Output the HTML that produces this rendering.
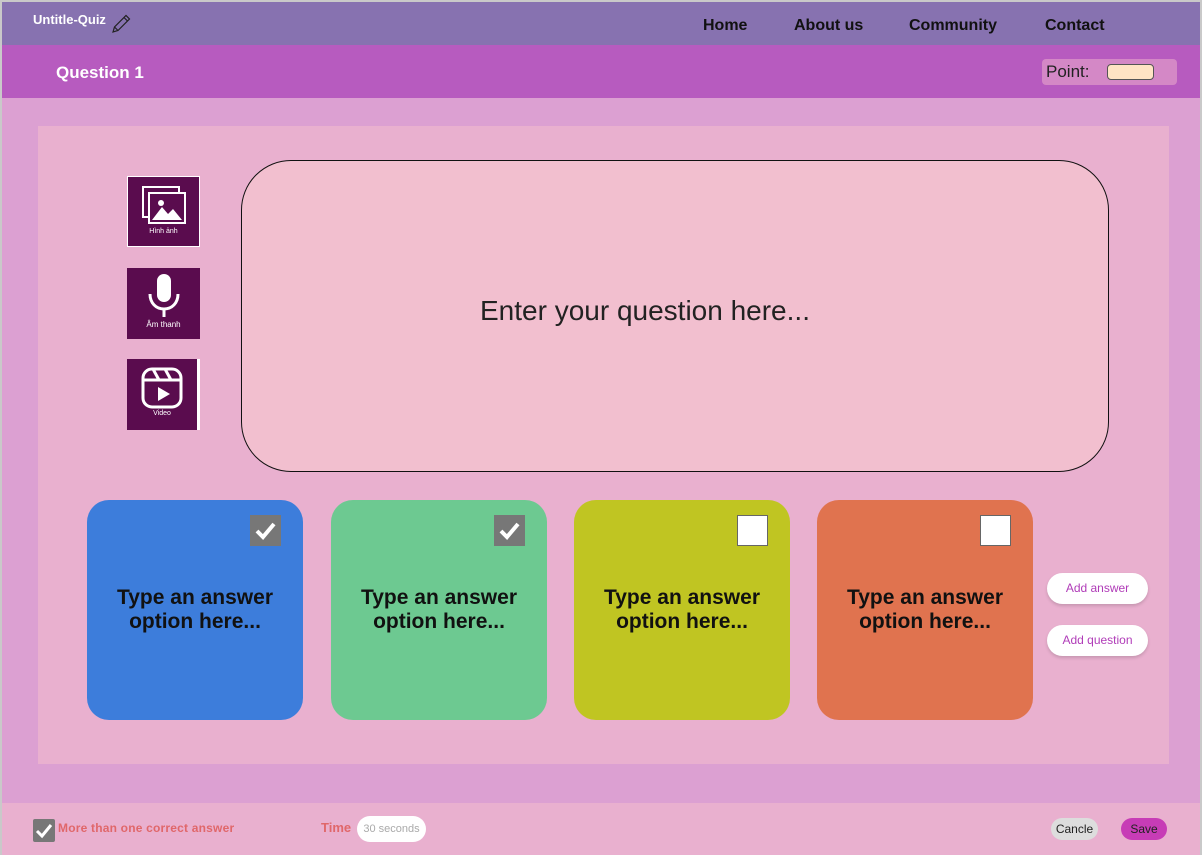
<!DOCTYPE html>
<html><head><meta charset="utf-8"><style>
*{margin:0;padding:0;box-sizing:border-box}
body{width:1202px;height:855px;overflow:hidden;background:#dca0d2;font-family:"Liberation Sans",sans-serif;position:relative}
.a{position:absolute}
.frame{left:0;top:0;width:1202px;height:855px;border:2px solid #c9c9c9;border-bottom:none;pointer-events:none}
.top{left:0;top:0;width:1202px;height:45px;background:#8772b0}
.qbar{left:0;top:45px;width:1202px;height:53px;background:#b75bbf}
.nav{top:17px;font-weight:bold;font-size:16px;color:#111}
.panel{left:38px;top:126px;width:1131px;height:638px;background:#e9b0cf}
.qbox{left:241px;top:160px;width:868px;height:312px;background:#f2bfcf;border:1px solid #111;border-radius:50px;display:flex;align-items:center;justify-content:center;font-size:28px;color:#222;padding-right:60px;padding-bottom:10px}
.media{left:127px;width:73px;height:71px;background:#5a0c4e;color:#fff;font-size:7px;text-align:center}
.card{top:500px;width:216px;height:220px;border-radius:22px;display:flex;align-items:center;justify-content:center;text-align:center;font-weight:bold;font-size:21px;line-height:24px;color:#111;padding-top:0}
.cb{width:31px;height:31px;top:15px;right:22px;position:absolute;background:#fff;border:1px solid #666}
.cb.on{background:#777;border:none}
.btn{left:1047px;width:101px;height:31px;background:#fff;border-radius:16px;color:#b03cb8;font-size:12px;line-height:31px;text-align:center;box-shadow:0 2px 3px rgba(0,0,0,.15)}
.foot{left:0;top:803px;width:1202px;height:52px;background:#e9b0cf}
</style></head><body>
<div class="a top"></div>
<div class="a" style="left:33px;top:12px;color:#fff;font-weight:bold;font-size:13px">Untitle-Quiz</div>
<svg class="a" style="left:110px;top:11px" width="24" height="24" viewBox="0 0 24 24" fill="none" stroke="#222" stroke-width="1.2"><path d="M3 21l1.5-5L16 4.5l3.5 3.5L8 19.5z M14 6.5l3.5 3.5 M4.5 16l3.5 3.5"/></svg>
<div class="a nav" style="left:703px">Home</div>
<div class="a nav" style="left:794px">About us</div>
<div class="a nav" style="left:909px">Community</div>
<div class="a nav" style="left:1045px">Contact</div>
<div class="a qbar"></div>
<div class="a" style="left:56px;top:63px;color:#fff;font-weight:bold;font-size:17px">Question 1</div>
<div class="a" style="left:1042px;top:59px;width:135px;height:26px;background:#d488c6;border-radius:4px"></div>
<div class="a" style="left:1046px;top:62px;font-size:17px;color:#222">Point:</div>
<div class="a" style="left:1107px;top:64px;width:47px;height:16px;background:#ffe4c4;border:1px solid #555;border-radius:4px"></div>
<div class="a panel"></div>
<div class="a media" style="top:176px;border:1px solid #fff">
<svg width="50" height="46" viewBox="0 0 50 46" style="margin-top:6px"><rect x="4" y="4" width="36" height="30" fill="none" stroke="#fff" stroke-width="2"/><rect x="10" y="10" width="36" height="30" fill="#5a0c4e" stroke="#fff" stroke-width="2"/><circle cx="22" cy="20" r="3" fill="#fff"/><path d="M13 37l10-13 6 7 5-5 9 11z" fill="#fff"/></svg><div style="margin-top:-3px">Hình ảnh</div></div>
<div class="a media" style="top:268px">
<svg width="40" height="50" viewBox="0 0 40 50" style="margin-top:4px"><rect x="13" y="2" width="14" height="28" rx="7" fill="#fff"/><path d="M6 22c0 9 6 15 14 15s14-6 14-15" fill="none" stroke="#fff" stroke-width="3"/><path d="M20 37v8" stroke="#fff" stroke-width="3"/></svg><div style="margin-top:-4px;font-size:8px">Âm thanh</div></div>
<div class="a media" style="top:359px;border-right:3px solid #fff">
<svg width="46" height="46" viewBox="0 0 46 46" style="margin-top:6px"><rect x="4" y="4" width="38" height="38" rx="9" fill="none" stroke="#fff" stroke-width="3"/><path d="M4 15h38 M14 4l6 11 M26 4l6 11" stroke="#fff" stroke-width="3"/><path d="M19 22v14l12-7z" fill="#fff"/></svg><div style="margin-top:-3px">Video</div></div>
<div class="a qbox">Enter your question here...</div>
<div class="a card" style="left:87px;background:#3d7ddb"><div class="cb on"><svg width="31" height="31" viewBox="0 0 31 31"><path d="M7 16l6 6 11-13" fill="none" stroke="#fff" stroke-width="4"/></svg></div>Type an answer<br>option here...</div>
<div class="a card" style="left:331px;background:#6dc991"><div class="cb on"><svg width="31" height="31" viewBox="0 0 31 31"><path d="M7 16l6 6 11-13" fill="none" stroke="#fff" stroke-width="4"/></svg></div>Type an answer<br>option here...</div>
<div class="a card" style="left:574px;background:#c0c522"><div class="cb"></div>Type an answer<br>option here...</div>
<div class="a card" style="left:817px;background:#e0734f"><div class="cb"></div>Type an answer<br>option here...</div>
<div class="a btn" style="top:573px">Add answer</div>
<div class="a btn" style="top:625px">Add question</div>
<div class="a foot"></div>
<div class="a" style="left:33px;top:819px;width:22px;height:23px;background:#777;border-radius:2px"><svg width="22" height="23" viewBox="0 0 22 23"><path d="M4 12l5 5 9-11" fill="none" stroke="#fff" stroke-width="3"/></svg></div>
<div class="a" style="left:58px;top:821px;color:#e0676a;font-weight:bold;font-size:12px;letter-spacing:0.2px">More than one correct answer</div>
<div class="a" style="left:321px;top:820px;color:#e0676a;font-weight:bold;font-size:13px">Time</div>
<div class="a" style="left:357px;top:816px;width:69px;height:26px;background:#fff;border-radius:13px;color:#aaa;font-size:11px;line-height:26px;text-align:center">30 seconds</div>
<div class="a" style="left:1051px;top:818px;width:47px;height:22px;background:#ddd;border-radius:11px;font-size:12px;line-height:22px;text-align:center;color:#222">Cancle</div>
<div class="a" style="left:1121px;top:818px;width:46px;height:22px;background:#c73cb6;border-radius:11px;font-size:12px;line-height:22px;text-align:center;color:#222">Save</div>
<div class="a frame"></div>
</body></html>
